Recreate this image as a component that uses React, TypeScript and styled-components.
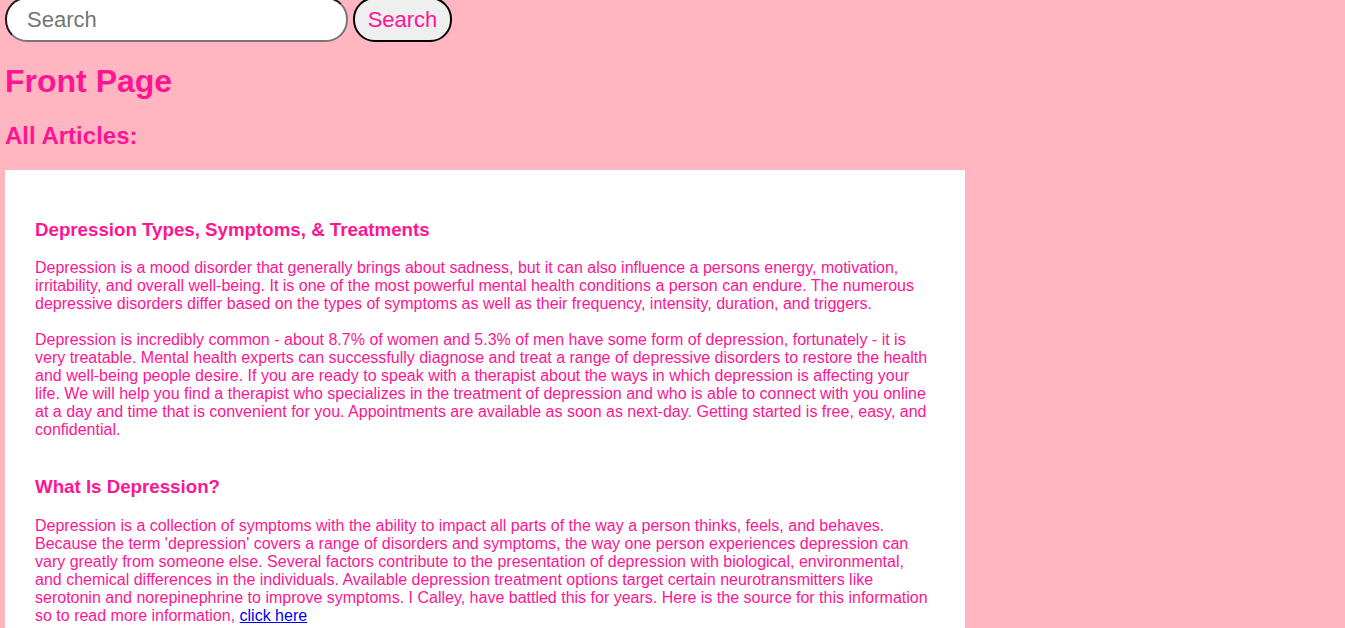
import React from "react";
import styled, { createGlobalStyle } from "styled-components";

const GlobalStyle = createGlobalStyle`
  html, body {
    margin: 0;
    padding: 0;
    background: #ffb6c1;
    font-family: "Liberation Sans", Arial, sans-serif;
    color: #ff1493;
  }
`;

const Page = styled.div`
  padding: 0 5px;
  overflow: hidden;
`;

const SearchForm = styled.form`
  display: flex;
  align-items: center;
  gap: 5px;
  margin-top: -3px;
`;

const SearchInput = styled.input`
  box-sizing: border-box;
  width: 343px;
  height: 45px;
  padding: 0 20px;
  font-family: "Liberation Sans", Arial, sans-serif;
  font-size: 22px;
  border-radius: 22px;
  border-width: 2px;
  border-style: solid;
  border-color: #1a1a1a #767676 #767676 #1a1a1a;
  background: #fff;
  outline: none;
  &::placeholder {
    color: #757575;
  }
`;

const SearchButton = styled.button`
  box-sizing: border-box;
  width: 99px;
  height: 45px;
  padding: 0;
  font-family: "Liberation Sans", Arial, sans-serif;
  font-size: 22px;
  color: #ff1493;
  background: #efefef;
  border: 2px solid #000;
  border-radius: 22px;
`;

const Title = styled.h1`
  font-size: 32px;
  font-weight: bold;
  margin: 21px 0 21px;
`;

const SubTitle = styled.h2`
  font-size: 24px;
  font-weight: bold;
  margin: 22px 0 20px;
`;

const Card = styled.div`
  width: 960px;
  box-sizing: border-box;
  background: #fff;
  padding: 30px;
  display: flex;
  flex-direction: column;
`;

const Article = styled.div`
  display: flow-root;
`;

const ArticleTitle = styled.h3`
  font-size: 18.72px;
  font-weight: bold;
  margin: 18.72px 0;
`;

const Para = styled.p`
  font-size: 16px;
  margin: 18px 0;
`;

const Link = styled.a`
  color: #0000ee;
  text-decoration: underline;
`;

export default function App() {
  return (
    <>
      <GlobalStyle />
      <Page>
        <SearchForm onSubmit={(e) => e.preventDefault()}>
          <SearchInput type="text" placeholder="Search" />
          <SearchButton type="submit">Search</SearchButton>
        </SearchForm>
        <Title>Front Page</Title>
        <SubTitle>All Articles:</SubTitle>
        <Card>
          <Article>
            <ArticleTitle>Depression Types, Symptoms, &amp; Treatments</ArticleTitle>
            <Para>
              Depression is a mood disorder that generally brings about sadness, but it can also
              influence a persons energy, motivation, irritability, and overall well-being. It is one
              of the most powerful mental health conditions a person can endure. The numerous
              depressive disorders differ based on the types of symptoms as well as their frequency,
              intensity, duration, and triggers.
            </Para>
            <Para>
              Depression is incredibly common - about 8.7% of women and 5.3% of men have some form of
              depression, fortunately - it is very treatable. Mental health experts can successfully
              diagnose and treat a range of depressive disorders to restore the health and well-being
              people desire. If you are ready to speak with a therapist about the ways in which
              depression is affecting your life. We will help you find a therapist who specializes in
              the treatment of depression and who is able to connect with you online at a day and
              time that is convenient for you. Appointments are available as soon as next-day.
              Getting started is free, easy, and confidential.
            </Para>
          </Article>
          <Article>
            <ArticleTitle>What Is Depression?</ArticleTitle>
            <Para>
              Depression is a collection of symptoms with the ability to impact all parts of the way a
              person thinks, feels, and behaves. Because the term 'depression' covers a range of
              disorders and symptoms, the way one person experiences depression can vary greatly from
              someone else. Several factors contribute to the presentation of depression with
              biological, environmental, and chemical differences in the individuals. Available
              depression treatment options target certain neurotransmitters like serotonin and
              norepinephrine to improve symptoms. I Calley, have battled this for years. Here is the
              source for this information so to read more information,{" "}
              <Link href="#">click here</Link>
            </Para>
          </Article>
        </Card>
      </Page>
    </>
  );
}
